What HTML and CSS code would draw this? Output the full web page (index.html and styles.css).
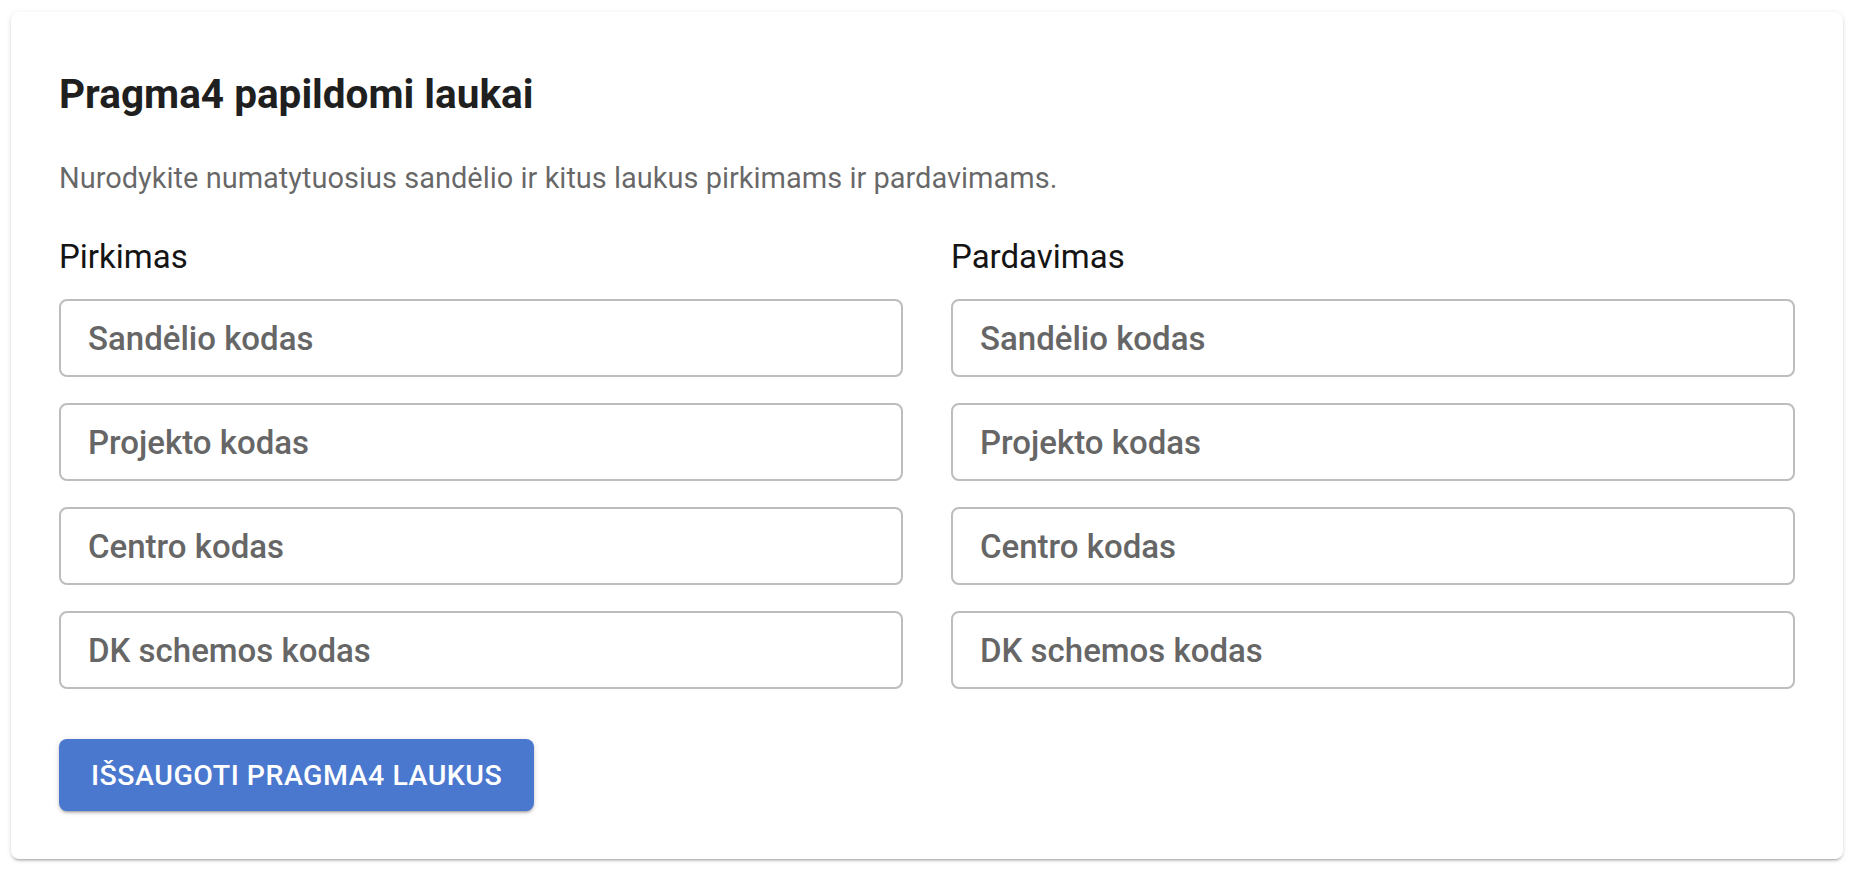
FILE: index.html
```html
<!DOCTYPE html>
<html lang="lt">
<head>
    <meta charset="UTF-8">
    <meta name="viewport" content="width=device-width, initial-scale=1.0">
    <title>Pragma4 papildomi laukai</title>
    <link rel="stylesheet" href="styles.css">
</head>
<body>
    <main class="page">
        <section class="fields-card">
            <h2 class="card-title">Pragma4 papildomi laukai</h2>
            <p class="card-text">Nurodykite numatytuosius sandėlio ir kitus laukus pirkimams ir pardavimams.</p>

            <div class="fields-grid">
                <div class="fields-column">
                    <h3 class="column-title">Pirkimas</h3>
                    <input type="text" class="field-input" placeholder="Sandėlio kodas">
                    <input type="text" class="field-input" placeholder="Projekto kodas">
                    <input type="text" class="field-input" placeholder="Centro kodas">
                    <input type="text" class="field-input" placeholder="DK schemos kodas">
                </div>
                <div class="fields-column">
                    <h3 class="column-title">Pardavimas</h3>
                    <input type="text" class="field-input" placeholder="Sandėlio kodas">
                    <input type="text" class="field-input" placeholder="Projekto kodas">
                    <input type="text" class="field-input" placeholder="Centro kodas">
                    <input type="text" class="field-input" placeholder="DK schemos kodas">
                </div>
            </div>

            <div class="card-actions">
                <button class="btn-save">Išsaugoti Pragma4 laukus</button>
            </div>
        </section>
    </main>
</body>
</html>
```

FILE: styles.css
```css
:root {
    --primary: #4a78cf;
    --text: rgba(0,0,0,0.87);
    --muted: rgba(0,0,0,0.6);
    --border: #bdbdbd;
}

* {
    box-sizing: border-box;
    margin: 0;
    padding: 0;
}

body {
    font-family: Roboto, 'Liberation Sans', Arial, sans-serif;
    background: #fff;
    color: var(--text);
}

.page {
    padding: 12px 12px 12px 11px;
}

.fields-card {
    background: #fff;
    border-radius: 8px;
    padding: 58px 48px 48px;
    box-shadow: 0 3px 2px -2px rgba(0,0,0,0.2), 0 2px 3px 0 rgba(0,0,0,0.12), 0 1px 6px 0 rgba(0,0,0,0.08);
}

.card-title {
    font-size: 40.5px;
    line-height: 48px;
    font-weight: 700;
    color: #1f1f1f;
}

.card-text {
    margin-top: 40px;
    font-size: 29px;
    line-height: 40px;
    color: var(--muted);
}

.fields-grid {
    display: grid;
    grid-template-columns: 1fr 1fr;
    gap: 48px;
    margin-top: 39px;
}

.fields-column {
    display: flex;
    flex-direction: column;
    gap: 26px;
}

.column-title {
    font-size: 33px;
    line-height: 40px;
    font-weight: 400;
    color: #141414;
    margin-bottom: -4px;
}

.field-input {
    width: 100%;
    height: 78px;
    padding: 0 27px;
    border: 2px solid var(--border);
    border-radius: 8px;
    font-family: inherit;
    font-size: 33px;
    font-weight: 500;
    color: var(--text);
    background: #fff;
    outline: none;
}

.field-input::placeholder {
    color: #666;
    opacity: 1;
}

.card-actions {
    margin-top: 50px;
    display: flex;
}

.btn-save {
    height: 72px;
    padding: 0 32px;
    border: none;
    border-radius: 8px;
    background: var(--primary);
    color: #fff;
    font-family: inherit;
    font-size: 28.5px;
    font-weight: 500;
    letter-spacing: 0.5px;
    text-transform: uppercase;
    cursor: pointer;
    box-shadow: 0 3px 2px -2px rgba(0,0,0,0.2), 0 2px 3px 0 rgba(0,0,0,0.14), 0 1px 6px 0 rgba(0,0,0,0.12);
}
```
